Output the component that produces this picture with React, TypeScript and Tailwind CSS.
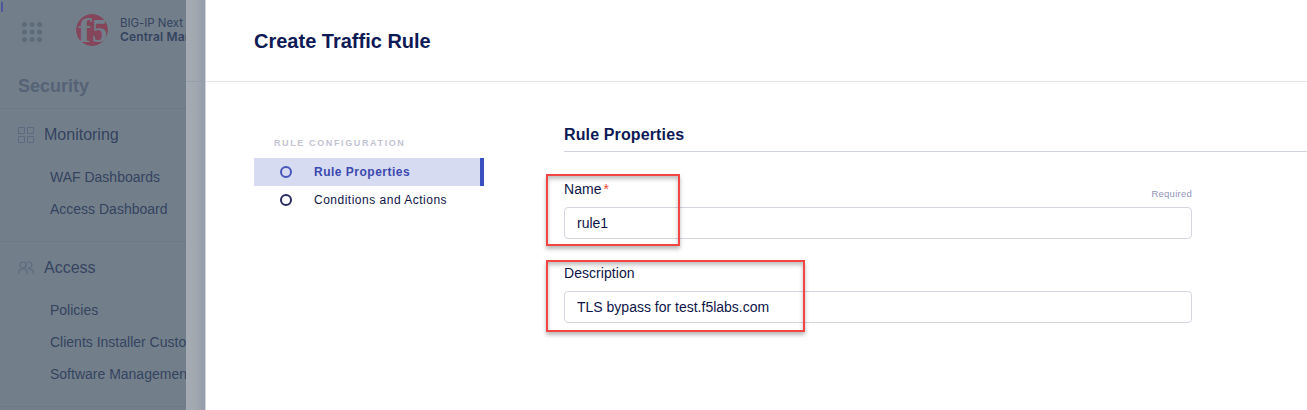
import React from "react";

const red = "pointer-events-none absolute border-2 border-[#f44545] shadow-[0_3px_4px_rgba(0,0,0,0.28),inset_0_3px_4px_rgba(0,0,0,0.25)]";

function AppsIcon() {
  return (
    <svg width="20" height="20" viewBox="0 0 20 20" fill="#5c6c7a">
      {[2.5, 10, 17.5].map((y) => [2.5, 10, 17.5].map((x) => <circle key={`${x}-${y}`} cx={x} cy={y} r="2.5" />))}
    </svg>
  );
}

function Logo() {
  return (
    <svg width="32" height="32" viewBox="0 0 32 32">
      <defs>
        <clipPath id="disc"><circle cx="16" cy="16" r="16" /></clipPath>
      </defs>
      <g clipPath="url(#disc)">
        <circle cx="16" cy="16" r="16" fill="#85455a" />
        <text x="2" y="27.500" fontFamily="Liberation Serif, serif" fontWeight="700" fontSize="34" textLength="13.5" lengthAdjust="spacingAndGlyphs" fill="#727f8a">f</text>
        <text x="16" y="27.500" fontFamily="Liberation Serif, serif" fontWeight="700" fontSize="33" textLength="15.5" lengthAdjust="spacingAndGlyphs" fill="#727f8a">5</text>
      </g>
    </svg>
  );
}

function GridIcon() {
  return (
    <svg width="16" height="16" viewBox="0 0 16 16" fill="none" stroke="#5d6a7f">
      <path d="M.5.5h6v6h-6zM9.5.5h6v6h-6zM.5 9.5h6v6h-6zM9.5 9.5h6v6h-6z" />
    </svg>
  );
}

function UsersIcon() {
  return (
    <svg width="16" height="16" viewBox="0 0 16 16" fill="none" stroke="#5d6a7f" strokeWidth="1.2" strokeLinecap="round">
      <circle cx="5" cy="5" r="3" />
      <path d="M.6 13.5C.6 10.8 2.500 9 5 9s4.400 1.800 4.400 4.500M9.300 2.500A3 3 0 1 1 10 7.900M11 9c2.500 0 4.400 1.800 4.400 4.500" />
    </svg>
  );
}

function Sidebar() {
  return (
    <aside className="flex h-full w-[186px] shrink-0 flex-col overflow-hidden whitespace-nowrap bg-[#727f8a] text-[#35435f]">
      <div className="flex h-[60px] shrink-0 pl-[22px] pt-[14px]">
        <div className="pt-2"><AppsIcon /></div>
        <div className="ml-[34px]"><Logo /></div>
        <div className="ml-3 pt-[2px] font-[Inter,sans-serif] text-[11px] leading-[14px]">
          <div className="text-[11.5px] tracking-[-0.05px]">BIG-IP Next</div>
          <div className="text-[12px] font-semibold tracking-[0.15px]">Central Manager</div>
        </div>
      </div>
      <div className="h-[49px] shrink-0 border-b border-[#6c7985] pl-[18px] pt-[15px] text-[18px] font-bold leading-[22px] text-[#566276]">Security</div>
      <div className="h-[133px] shrink-0 border-b border-[#6c7985] pt-[14px]">
        <div className="flex h-6 items-center gap-[10px] pl-[18px] text-base"><GridIcon />Monitoring</div>
        <div className="pl-[50px] pt-[14px] text-sm leading-8"><div>WAF Dashboards</div><div>Access Dashboard</div></div>
      </div>
      <div className="h-[165px] shrink-0 border-b border-[#6c7985] pt-[14px]">
        <div className="flex h-6 items-center gap-[10px] pl-[18px] text-base"><UsersIcon />Access</div>
        <div className="pl-[50px] pt-[14px] text-sm leading-8"><div>Policies</div><div>Clients Installer Customization</div><div>Software Management</div></div>
      </div>
    </aside>
  );
}

function Field({ label, value, required }: { label: string; value: string; required?: boolean }) {
  return (
    <label className="block h-[84px] w-[628px]">
      <span className="flex h-[26px] justify-between leading-4">
        <span className="tracking-[0.05px]">{label}{required && <span className="ml-[2px] text-[#f04438]">*</span>}</span>
        {required && <span className="pt-[7px] text-[9.500px] leading-3 tracking-[0.25px] text-[#8f94b5]">Required</span>}
      </span>
      <input className="block h-8 w-full rounded border border-[#d5d7e0] px-3 outline-none" readOnly value={value} />
    </label>
  );
}

export default function App() {
  return (
    <div className="relative flex h-[410px] w-full overflow-hidden bg-white font-['Liberation_Sans',Arial,sans-serif] text-sm text-[#0e1548]">
      <Sidebar />
      <div className="h-full w-5 shrink-0 border-r border-[#d0d2df] bg-linear-to-r from-[#a4abb2] via-[#a1a8b0] to-[#969dab]">
        <div className="h-[82px] border-b border-[#979eab]" />
      </div>
      <main className="flex h-full min-w-0 flex-1 flex-col">
        <header className="h-[82px] shrink-0 border-b border-[#e5e6ef] pl-12 pt-[29px] text-xl font-bold leading-6 text-[#0e1a55]">Create Traffic Rule</header>
        <div className="flex min-h-0 flex-1 pl-12">
          <nav className="w-[230px] shrink-0 pt-[56px] tracking-[0.5px]">
            <div className="h-5 pl-5 text-[9px] font-bold leading-[11px] tracking-[1.62px] text-[#c2c4d2]">RULE CONFIGURATION</div>
            <div className="flex h-7 items-center border-r-4 border-[#3b50c0] bg-[#d7dbf1] pl-[26px] text-xs font-bold text-[#3b48ae]">
              <span className="mr-[22px] size-3 rounded-full border-2 border-[#4656b8]" />Rule Properties
            </div>
            <div className="flex h-7 items-center pl-[26px] text-xs">
              <span className="mr-[22px] size-3 rounded-full border-2 border-[#272c61]" />Conditions and Actions
            </div>
          </nav>
          <section className="ml-20 min-w-0 flex-1 pt-[43px]">
            <h2 className="h-[27px] border-b border-[#ced1de] text-base font-bold leading-5 tracking-[0.13px] text-[#0e1a55]">Rule Properties</h2>
            <div className="pt-[29px]">
              <Field label="Name" value="rule1" required />
              <Field label="Description" value="TLS bypass for test.f5labs.com" />
            </div>
          </section>
        </div>
      </main>
      <div className={`${red} left-[546px] top-[174px] h-[72px] w-[134px]`} />
      <div className={`${red} left-[546px] top-[260px] h-[72px] w-[259px]`} />
      <div className="absolute left-px top-[2px] h-[10px] w-[2px] bg-[#4d5799]" />
    </div>
  );
}
